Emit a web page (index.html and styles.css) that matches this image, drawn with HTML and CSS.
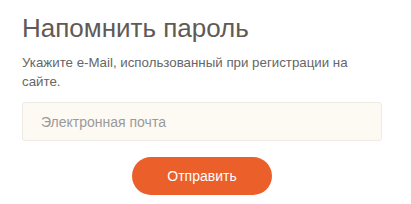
FILE: index.html
```html
<!doctype html>
<html lang="ru">
<head>
  <meta charset="UTF-8">
  <meta name="viewport" content="width=device-width, initial-scale=1">
  <title>Напомнить пароль</title>
  <link rel="stylesheet" href="styles.css">
</head>
<body>
  <div class="remind">
    <h1 class="remind-title">Напомнить пароль</h1>
    <p class="remind-text">Укажите e-Mail, использованный при регистрации на сайте.</p>
    <form class="remind-form">
      <input class="remind-input" type="email" placeholder="Электронная почта">
      <button class="remind-submit" type="button">Отправить</button>
    </form>
  </div>
</body>
</html>
```

FILE: styles.css
```css
body {
  margin: 0;
  padding: 0;
  background-color: #fff;
  font-family: Arial, 'Liberation Sans', sans-serif;
}

h1, p {
  margin: 0;
}

.remind {
  width: 360px;
  padding: 13px 0 0 22px;
}

.remind-title {
  font-size: 26px;
  font-weight: normal;
  color: #5f5a56;
  line-height: 30px;
}

.remind-text {
  margin-top: 10px;
  font-size: 13.3px;
  line-height: 19px;
  color: #666;
  width: 340px;
}

.remind-form {
  display: flex;
  flex-direction: column;
  align-items: center;
  margin-top: 11px;
}

.remind-input {
  box-sizing: border-box;
  width: 360px;
  height: 39px;
  padding: 0 18px;
  border: 1px solid #efebe4;
  border-radius: 3px;
  background-color: #fdfaf4;
  font-family: inherit;
  font-size: 14px;
  color: #555;
  outline: none;
}

.remind-input::placeholder {
  color: #9a9a9a;
}

.remind-submit {
  margin-top: 16px;
  width: 140px;
  height: 38px;
  border: none;
  border-radius: 19px;
  background-color: #ea5f2a;
  color: #fff;
  font-family: inherit;
  font-size: 14px;
  cursor: pointer;
}
```
